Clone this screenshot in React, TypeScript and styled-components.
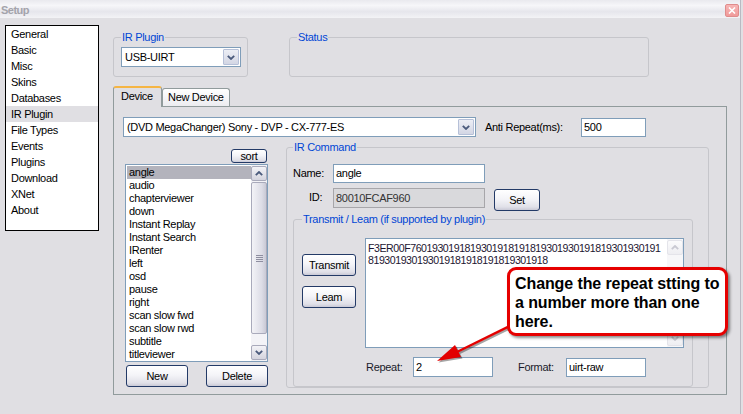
import styled, { createGlobalStyle } from 'styled-components';

const GlobalStyle = createGlobalStyle`
  html, body {
    margin: 0;
    padding: 0;
    background: #e0dfe3;
  }
  body {
    font-family: 'Liberation Sans', Arial, sans-serif;
    font-size: 11px;
    letter-spacing: -0.3px;
    color: #000;
  }
  * {
    box-sizing: border-box;
  }
`;

const navItems = [
  'General',
  'Basic',
  'Misc',
  'Skins',
  'Databases',
  'IR Plugin',
  'File Types',
  'Events',
  'Plugins',
  'Download',
  'XNet',
  'About',
];

const commands = [
  'angle',
  'audio',
  'chapterviewer',
  'down',
  'Instant Replay',
  'Instant Search',
  'IRenter',
  'left',
  'osd',
  'pause',
  'right',
  'scan slow fwd',
  'scan slow rwd',
  'subtitle',
  'titleviewer',
];

const codeLines = [
  'F3ER00F7601930191819301918191819301930191819301930191',
  '819301930193019181918191819301918',
];

function Chevron({ up, faded }: { up?: boolean; faded?: boolean }) {
  return (
    <svg width="8" height="5" viewBox="0 0 8 5">
      <polyline
        points={up ? '0.8,4.2 4,1 7.2,4.2' : '0.8,0.8 4,4 7.2,0.8'}
        fill="none"
        stroke={faded ? '#c9c9d2' : '#4a5a7c'}
        strokeWidth="1.8"
      />
    </svg>
  );
}

export default function App() {
  return (
    <>
      <GlobalStyle />
      <Window>
        <TitleBar>
          <Title>Setup</Title>
          <CloseBtn>
            <svg width="8" height="7" viewBox="0 0 8 7">
              <path d="M1 0.5 L7 6.5 M7 0.5 L1 6.5" stroke="#fff" strokeWidth="1.6" />
            </svg>
          </CloseBtn>
        </TitleBar>
        <Body>
          <Nav>
            {navItems.map((item) => (
              <NavItem key={item} $active={item === 'IR Plugin'}>
                {item}
              </NavItem>
            ))}
          </Nav>
          <Main>
            <TopRow>
              <Group $w={135} $h={46} $pl={7}>
                <Legend>IR Plugin</Legend>
                <ComboBox $w={120} $mt={3}>
                  <ComboText>USB-UIRT</ComboText>
                  <ComboButton>
                    <Chevron />
                  </ComboButton>
                </ComboBox>
              </Group>
              <Group $w={360} $h={46} $pl={7} $ml={41}>
                <Legend>Status</Legend>
              </Group>
            </TopRow>

            <TabStrip>
              <Tab $active $w={49}>
                Device
              </Tab>
              <Tab $w={68}>New Device</Tab>
            </TabStrip>

            <TabPanel>
              <DeviceRow>
                <ComboBox $w={353}>
                  <ComboText>(DVD MegaChanger) Sony - DVP - CX-777-ES</ComboText>
                  <ComboButton>
                    <Chevron />
                  </ComboButton>
                </ComboBox>
                <Label $w={96} $ml={9}>
                  Anti Repeat(ms):
                </Label>
                <TextBox $w={65} $h={19}>
                  500
                </TextBox>
              </DeviceRow>

              <MainRow>
                <ListColumn>
                  <Btn $w={36} $h={14} $small>
                    sort
                  </Btn>
                  <ListBox>
                    <ListItems>
                      {commands.map((c) => (
                        <ListItem key={c} $active={c === 'angle'}>
                          {c}
                        </ListItem>
                      ))}
                    </ListItems>
                    <ScrollBar>
                      <ScrollArrow>
                        <Chevron up />
                      </ScrollArrow>
                      <ScrollThumb>
                        <Grip />
                      </ScrollThumb>
                      <ScrollArrow>
                        <Chevron />
                      </ScrollArrow>
                    </ScrollBar>
                  </ListBox>
                  <ListButtons>
                    <Btn $w={62} $h={22}>
                      New
                    </Btn>
                    <Btn $w={62} $h={22}>
                      Delete
                    </Btn>
                  </ListButtons>
                </ListColumn>

                <Group $w={423} $h={247} $pl={6} $ml={18}>
                  <Legend>IR Command</Legend>
                  <FieldRow $mt={10}>
                    <Label $w={40}>Name:</Label>
                    <TextBox $w={152} $h={19}>
                      angle
                    </TextBox>
                  </FieldRow>
                  <FieldRow $mt={5}>
                    <Label $w={40} $pl={16}>
                      ID:
                    </Label>
                    <TextBox $w={152} $h={20} $readOnly>
                      80010FCAF960
                    </TextBox>
                    <Btn $w={46} $h={22} $ml={9} $mt={1}>
                      Set
                    </Btn>
                  </FieldRow>

                  <Group $w={400} $h={174} $pl={8} $mt={2}>
                    <Legend>Transmit / Leam (if supported by plugin)</Legend>
                    <TransmitGrid>
                      <ButtonStack>
                        <Btn $w={54} $h={22} $mt={16}>
                          Transmit
                        </Btn>
                        <Btn $w={54} $h={22} $mt={10}>
                          Leam
                        </Btn>
                      </ButtonStack>
                      <CodeColumn>
                        <CodeArea>
                          <CodeText>
                            {codeLines.map((l) => (
                              <CodeLine key={l}>{l}</CodeLine>
                            ))}
                          </CodeText>
                          <ScrollBar $faded>
                            <ScrollArrow $faded>
                              <Chevron up faded />
                            </ScrollArrow>
                            <ScrollArrow $faded>
                              <Chevron faded />
                            </ScrollArrow>
                          </ScrollBar>
                        </CodeArea>
                        <RepeatRow>
                          <Label $w={48} $pl={1}>
                            Repeat:
                          </Label>
                          <TextBox $w={80} $h={20}>
                            2
                          </TextBox>
                          <Label $w={48} $ml={25}>
                            Format:
                          </Label>
                          <TextBox $w={80} $h={19}>
                            uirt-raw
                          </TextBox>
                        </RepeatRow>
                      </CodeColumn>
                    </TransmitGrid>
                  </Group>
                </Group>
              </MainRow>
            </TabPanel>
          </Main>
        </Body>

        <ArrowLayer width="743" height="414" viewBox="0 0 743 414">
          <g transform="translate(1.5 1.5)" opacity="0.35">
            <line x1="512" y1="325" x2="457" y2="352" stroke="#000" strokeWidth="2.5" />
            <polygon points="437,361 455,345 461,357" fill="#000" />
          </g>
          <line x1="512" y1="325" x2="457" y2="352" stroke="#e30000" strokeWidth="2.5" />
          <polygon points="437,361 455,345 461,357" fill="#e30000" />
        </ArrowLayer>

        <Callout>
          Change the repeat stting to
          <br />
          a number more than one
          <br />
          here.
        </Callout>
      </Window>
    </>
  );
}

const Window = styled.div`
  position: relative;
  width: 741px;
  height: 414px;
  overflow: hidden;
  border-right: 1px solid #b9b9c2;
  background: #e0dfe3;
`;

const TitleBar = styled.div`
  height: 18px;
  display: flex;
  align-items: center;
  justify-content: space-between;
  padding: 0 1px 0 1px;
  background: linear-gradient(#e9e9ee 0%, #f6f6f9 30%, #e6e6ec 65%, #f3f3f6 100%);
`;

const Title = styled.div`
  color: #a3a3ab;
  font-size: 11px;
  letter-spacing: -0.5px;
  font-weight: bold;
  padding-top: 2px;
`;

const CloseBtn = styled.div`
  width: 14px;
  height: 13px;
  margin-top: 2px;
  display: flex;
  align-items: center;
  justify-content: center;
  border: 1px solid #df8c8c;
  border-radius: 2px;
  background: linear-gradient(#f7b5b5, #f09a9a);
`;

const Body = styled.div`
  display: flex;
  padding: 7px 0 0 5px;
`;

const Nav = styled.div`
  width: 94px;
  height: 206px;
  flex-shrink: 0;
  border: 1px solid #000;
  background: #fff;
`;

const NavItem = styled.div<{ $active?: boolean }>`
  height: 16px;
  line-height: 16px;
  padding-left: 5px;
  white-space: nowrap;
  background: ${(p) => (p.$active ? '#e0dfe3' : 'transparent')};
`;

const Main = styled.div`
  margin-left: 14px;
  width: 614px;
  display: flex;
  flex-direction: column;
`;

const TopRow = styled.div`
  display: flex;
  margin-top: 6px;
`;

const Group = styled.fieldset<{ $w: number; $h: number; $pl: number; $ml?: number; $mt?: number }>`
  flex-shrink: 0;
  margin: ${(p) => p.$mt ?? 0}px 0 0 ${(p) => p.$ml ?? 0}px;
  padding: 0 0 0 ${(p) => p.$pl}px;
  min-width: 0;
  width: ${(p) => p.$w}px;
  height: ${(p) => p.$h}px;
  border: 1px solid #c6c6cb;
  border-radius: 3px;
`;

const Legend = styled.legend`
  padding: 0 1px;
  margin: 0;
  color: #0046d5;
  line-height: 13px;
  white-space: nowrap;
`;

const ComboBox = styled.div<{ $w: number; $mt?: number }>`
  display: flex;
  width: ${(p) => p.$w}px;
  height: 20px;
  margin-top: ${(p) => p.$mt ?? 0}px;
  padding: 1px;
  border: 1px solid #7f9db9;
  background: #fff;
`;

const ComboText = styled.div`
  flex: 1;
  padding-left: 2px;
  line-height: 16px;
  white-space: nowrap;
  overflow: hidden;
`;

const ComboButton = styled.div`
  width: 16px;
  display: flex;
  align-items: center;
  justify-content: center;
  border: 1px solid #b6c0d8;
  border-radius: 1px;
  background: linear-gradient(#eceef5, #d3d6e4);
`;

const TabStrip = styled.div`
  display: flex;
  align-items: flex-end;
  height: 20px;
  margin-top: 9px;
  position: relative;
  z-index: 1;
`;

const Tab = styled.div<{ $active?: boolean; $w: number }>`
  width: ${(p) => p.$w}px;
  height: ${(p) => (p.$active ? 21 : 18)}px;
  margin-bottom: ${(p) => (p.$active ? -1 : 0)}px;
  padding: ${(p) => (p.$active ? '2px 0 0 7px' : '2px 0 0 5px')};
  border: 1px solid #919b9c;
  border-bottom: none;
  border-top: ${(p) => (p.$active ? '2px solid #f5b544' : '1px solid #919b9c')};
  border-radius: 3px 3px 0 0;
  background: ${(p) => (p.$active ? '#e0dfe3' : 'linear-gradient(#ffffff, #ececf0)')};
  white-space: nowrap;
  line-height: 13px;
`;

const TabPanel = styled.div`
  width: 614px;
  height: 289px;
  border: 1px solid #919b9c;
  padding: 10px 0 0 9px;
`;

const DeviceRow = styled.div`
  display: flex;
  align-items: center;
  height: 20px;
`;

const Label = styled.div<{ $w: number; $ml?: number; $pl?: number }>`
  width: ${(p) => p.$w}px;
  margin-left: ${(p) => p.$ml ?? 0}px;
  padding-left: ${(p) => p.$pl ?? 0}px;
  flex-shrink: 0;
  white-space: nowrap;
`;

const TextBox = styled.div<{ $w: number; $h: number; $readOnly?: boolean }>`
  width: ${(p) => p.$w}px;
  height: ${(p) => p.$h}px;
  line-height: ${(p) => p.$h - 2}px;
  padding-left: 2px;
  flex-shrink: 0;
  border: 1px solid ${(p) => (p.$readOnly ? '#a7a6aa' : '#7f9db9')};
  background: ${(p) => (p.$readOnly ? '#d9d9dc' : '#fff')};
  color: ${(p) => (p.$readOnly ? '#333' : '#000')};
  white-space: nowrap;
`;

const MainRow = styled.div`
  display: flex;
  margin-top: 4px;
`;

const ListColumn = styled.div`
  width: 143px;
  margin-left: 2px;
  display: flex;
  flex-direction: column;
  padding-top: 8px;

  & > button:first-child {
    align-self: flex-end;
    margin-right: 1px;
  }
`;

const Btn = styled.button<{ $w: number; $h: number; $ml?: number; $mt?: number; $small?: boolean }>`
  display: block;
  flex-shrink: 0;
  width: ${(p) => p.$w}px;
  height: ${(p) => p.$h}px;
  margin: ${(p) => p.$mt ?? 0}px 0 0 ${(p) => p.$ml ?? 0}px;
  padding: 0;
  border: 1px solid #233a67;
  border-radius: 3px;
  background: linear-gradient(#ffffff 0%, #f4f4f8 45%, #e0e0e8 85%, #c9c9d6 100%);
  font-family: inherit;
  font-size: 11px;
  letter-spacing: inherit;
  line-height: ${(p) => (p.$small ? '11px' : '13px')};
  color: #000;
`;

const ListBox = styled.div`
  display: flex;
  height: 198px;
  margin-top: 1px;
  border: 1px solid #7f9db9;
  background: #fff;
`;

const ListItems = styled.div`
  flex: 1;
  padding-top: 1px;
  overflow: hidden;
`;

const ListItem = styled.div<{ $active?: boolean }>`
  height: 13px;
  line-height: 13px;
  margin-left: 1px;
  padding-left: 2px;
  white-space: nowrap;
  background: ${(p) => (p.$active ? '#b3b3bc' : 'transparent')};
`;

const ScrollBar = styled.div<{ $faded?: boolean }>`
  width: 16px;
  flex-shrink: 0;
  display: flex;
  flex-direction: column;
  justify-content: space-between;
  padding: 1px 0;
  background: ${(p) => (p.$faded ? '#f7f7f9' : '#f3f3f7')};
`;

const ScrollArrow = styled.div<{ $faded?: boolean }>`
  height: 15px;
  display: flex;
  align-items: center;
  justify-content: center;
  border: 1px solid ${(p) => (p.$faded ? '#e4e4ea' : '#a9aabb')};
  border-radius: 2px;
  background: ${(p) =>
    p.$faded ? 'linear-gradient(#fbfbfc, #eeeef2)' : 'linear-gradient(#f3f3f7, #d4d4de)'};
`;

const ScrollThumb = styled.div`
  flex: 1;
  margin: 1px 0 11px;
  display: flex;
  align-items: center;
  justify-content: center;
  border: 1px solid #a9aabb;
  border-radius: 2px;
  background: linear-gradient(90deg, #f3f3f7, #dcdce6 70%, #c9c9d5);
`;

const Grip = styled.div`
  width: 7px;
  height: 7px;
  background: repeating-linear-gradient(#8e8ea0 0 1px, transparent 1px 2px);
`;

const ListButtons = styled.div`
  display: flex;
  justify-content: space-between;
  margin-top: 3px;
  padding-left: 1px;
`;

const FieldRow = styled.div<{ $mt: number }>`
  display: flex;
  align-items: flex-start;
  margin-top: ${(p) => p.$mt}px;
  line-height: 19px;
`;

const TransmitGrid = styled.div`
  display: grid;
  grid-template-columns: 54px 319px;
  column-gap: 9px;
  padding-top: 12px;
`;

const ButtonStack = styled.div`
  display: flex;
  flex-direction: column;
`;

const CodeColumn = styled.div`
  display: flex;
  flex-direction: column;
`;

const CodeArea = styled.div`
  display: flex;
  height: 110px;
  border: 1px solid #7f9db9;
  background: #fff;
`;

const CodeText = styled.div`
  flex: 1;
  min-width: 0;
  padding: 3px 0 0 2px;
  color: #1c1530;
  font-size: 10.6px;
  letter-spacing: -0.45px;
`;

const CodeLine = styled.div`
  height: 12px;
  line-height: 12px;
  white-space: pre;
`;

const RepeatRow = styled.div`
  display: flex;
  align-items: center;
  margin-top: 9px;
  color: #1a1a2a;
`;

const ArrowLayer = styled.svg`
  position: absolute;
  left: 0;
  top: 0;
  pointer-events: none;
`;

const Callout = styled.div`
  position: absolute;
  left: 507px;
  top: 267px;
  width: 221px;
  height: 69px;
  padding: 4px 0 0 5px;
  border: 3px solid #e60000;
  border-radius: 9px;
  background: #fff;
  box-shadow: 2px 2px 3px rgba(0, 0, 0, 0.45);
  font-family: 'Liberation Sans', Arial, sans-serif;
  font-size: 16px;
  font-weight: bold;
  letter-spacing: -0.1px;
  line-height: 19px;
  white-space: nowrap;
  color: #000;
`;
